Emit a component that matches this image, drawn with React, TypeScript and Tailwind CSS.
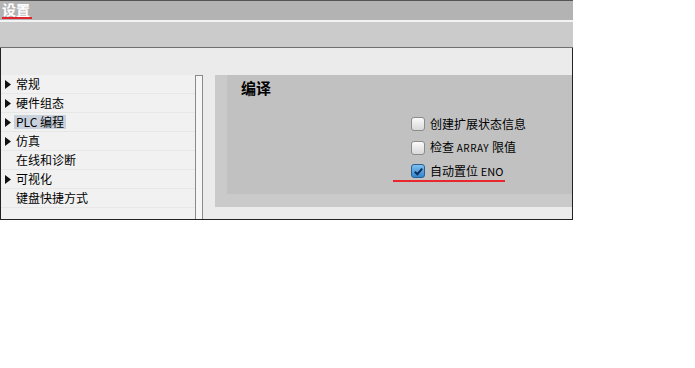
import React from 'react'

const font = { fontFamily: '"Noto Sans CJK SC", "Liberation Sans", sans-serif' }

const navItems: { label: React.ReactNode; arrow: boolean; active?: boolean }[] = [
  { label: '常规', arrow: true },
  { label: '硬件组态', arrow: true },
  { label: 'PLC 编程', arrow: true, active: true },
  { label: '仿真', arrow: true },
  { label: '在线和诊断', arrow: false },
  { label: '可视化', arrow: true },
  { label: '键盘快捷方式', arrow: false }
]

const Checkbox = ({ checked }: { checked?: boolean }) =>
  checked ? (
    <span className="flex h-[14px] w-[14px] items-center justify-center rounded-[3px] border border-[#2d5f8f] bg-gradient-to-b from-[#7fc0f0] to-[#2f86d2]">
      <svg viewBox="0 0 12 12" className="h-[11px] w-[11px]">
        <path d="M2 6.2 L4.8 9 L10 2.8" fill="none" stroke="#0f2f58" strokeWidth="2.2" />
      </svg>
    </span>
  ) : (
    <span className="block h-[14px] w-[14px] rounded-[3px] border border-[#8c8c8c] bg-gradient-to-b from-[#fafafa] to-[#d8d8d8]" />
  )

export default function App() {
  return (
    <div className="h-[368px] w-[695px] bg-white text-[12px] text-black" style={font}>
      <div className="w-[573px]">
        {/* title bar */}
        <div className="flex h-[20px] items-start border-t border-[#555] bg-[#b3b3b3] pl-[2px]">
          <span className="block h-[18px] border-b-2 border-[#e0262e] pr-[2px] text-[14px] font-bold leading-[16px] text-white">
            设置
          </span>
        </div>
        <div className="h-[2px] bg-[#f3f3f3]" />
        <div className="h-[26px] border-b border-[#707070] bg-[#cbcbcb]" />

        {/* body */}
        <div className="flex flex-col border-x border-b border-[#222] bg-[#ebebeb]">
          <div className="h-[27px]" />
          <div className="flex h-[144px]">
            <div className="w-[194px] bg-[#f1f1f1]">
              {navItems.map((item, i) => (
                <div key={i} className="flex h-[19px] items-center border-b border-[#e7e7e7]">
                  <span className="flex w-[13px] justify-center pl-[1px]">
                    {item.arrow && (
                      <svg viewBox="0 0 6 9" className="h-[9px] w-[6px]">
                        <path d="M0 0 L6 4.5 L0 9 Z" fill="#111" />
                      </svg>
                    )}
                  </span>
                  <span
                    className={
                      item.active
                        ? 'bg-[#c9d1dc] px-[2px] leading-[14px]'
                        : 'px-[2px] leading-[14px]'
                    }
                  >
                    {item.label}
                  </span>
                </div>
              ))}
            </div>
            <div className="w-[8px] border-x border-t border-[#8a8a8a] bg-[#f6f6f6]" />
            <div className="w-[12px]" />
            <div className="flex flex-1 flex-col">
              <div className="flex h-[132px] bg-[#cacaca] pl-[12px] pb-[13px]">
                <div className="flex-1 bg-[#c1c1c1] pl-[14px] pt-[3px]">
                  <div className="text-[15px] font-bold leading-[20px]">编译</div>
                  <div className="ml-[170px] mt-[19px] flex flex-col gap-[9px]">
                    <div className="flex items-center gap-[5px]">
                      <Checkbox />
                      <span className="leading-[14px]">创建扩展状态信息</span>
                    </div>
                    <div className="flex items-center gap-[5px]">
                      <Checkbox />
                      <span className="leading-[14px]">
                        检查 <span className="text-[10px] tracking-[0.5px]">ARRAY</span> 限值
                      </span>
                    </div>
                    <div className="flex w-fit flex-col">
                      <div className="flex items-center gap-[5px]">
                        <Checkbox checked />
                        <span className="leading-[14px]">
                          自动置位 <span className="text-[11px]">ENO</span>
                        </span>
                      </div>
                      <div className="-ml-[18px] mt-[2px] h-[2px] w-[112px] bg-[#e8262e]" />
                    </div>
                  </div>
                </div>
              </div>
              <div className="flex-1" />
            </div>
          </div>
        </div>
      </div>
    </div>
  )
}
